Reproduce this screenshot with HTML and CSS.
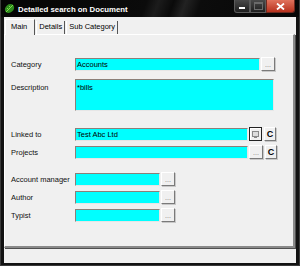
FILE: index.html
```html
<!DOCTYPE html>
<html lang="en">
<head>
    <meta charset="UTF-8">
    <title>Detailed search on Document</title>
    <link rel="stylesheet" href="styles.css">
</head>
<body>
<div class="window">
    <div class="titlebar">
        <svg class="app-icon" width="11" height="11" viewBox="0 0 11 11">
            <ellipse cx="5.5" cy="5.5" rx="5" ry="4" transform="rotate(-40 5.5 5.5)" fill="#2e8b1e"/>
            <path d="M2 9 L9 2 M3 5 L5 7 M5 3 L7 5" stroke="#7fdc4a" stroke-width="1" fill="none"/>
        </svg>
        <span class="title">Detailed search on Document</span>
        <div class="caption">
            <span class="cap cap-min"><i></i></span>
            <span class="cap cap-max"><i></i></span>
            <span class="cap cap-close">
                <svg width="9" height="7" viewBox="0 0 9 7"><path d="M1 0.5 L8 6.5 M8 0.5 L1 6.5" stroke="#fff" stroke-width="1.8"/></svg>
            </span>
        </div>
    </div>

    <div class="client">
        <div class="tabs">
            <span class="tab active">Main</span>
            <span class="tab">Details</span>
            <span class="tab">Sub Category</span>
        </div>

        <div class="panel">
            <div class="row row-category">
                <span class="label">Category</span>
                <span class="field w-category">Accounts</span>
                <span class="btn dots">...</span>
            </div>
            <div class="row row-desc">
                <span class="label label-top">Description</span>
                <span class="field area">*bills</span>
            </div>
            <div class="row row-linked">
                <span class="label">Linked to</span>
                <span class="field w-linked">Test Abc Ltd</span>
                <span class="btn pick">
                    <svg width="7" height="7" viewBox="0 0 7 7"><rect x="0.5" y="0.5" width="6" height="5" fill="#ddd" stroke="#888"/><rect x="2" y="6" width="3" height="1" fill="#888"/></svg>
                </span>
                <span class="btn clear">C</span>
            </div>
            <div class="row row-projects">
                <span class="label">Projects</span>
                <span class="field w-linked"></span>
                <span class="btn dots">...</span>
                <span class="btn clear">C</span>
            </div>
            <div class="row row-manager">
                <span class="label">Account manager</span>
                <span class="field w-short"></span>
                <span class="btn dots">...</span>
            </div>
            <div class="row row-small">
                <span class="label">Author</span>
                <span class="field w-short"></span>
                <span class="btn dots">...</span>
            </div>
            <div class="row row-small">
                <span class="label">Typist</span>
                <span class="field w-short"></span>
                <span class="btn dots">...</span>
            </div>
        </div>
    </div>
</div>
</body>
</html>
```

FILE: styles.css
```css
body {
    margin: 0;
    background: #ffffff;
    font-family: "Liberation Sans", Arial, sans-serif;
    font-size: 7.5px;
    color: #000;
}

.window {
    width: 300px;
    height: 266px;
    box-sizing: border-box;
    padding: 0 3px 3px 3px;
    background: #121212;
    border: 1px solid #3a3a3a;
    border-top: none;
}

/* title bar */
.titlebar {
    height: 17px;
    display: flex;
    align-items: center;
    margin: 0 -3px;
    padding-left: 3px;
    background: linear-gradient(110deg, #050505 0%, #0b0b0b 48%, #1c1c1c 52%, #0a0a0a 57%, #222 61%, #0c0c0c 66%, #070707 100%);
}
.app-icon {
    margin-right: 3px;
}
.title {
    color: #fff;
    font-weight: bold;
    font-size: 7.8px;
    flex: 1;
    padding-top: 1px;
}
.caption {
    display: flex;
    align-self: flex-start;
    margin-right: 4px;
}
.cap {
    height: 13px;
    width: 16px;
    box-sizing: border-box;
    border: 1px solid #5a5a5a;
    border-top: none;
    background: linear-gradient(#4a4a4a, #1e1e1e);
    display: flex;
    align-items: center;
    justify-content: center;
}
.cap-min {
    border-radius: 0 0 0 3px;
}
.cap-min i {
    display: block;
    width: 6px;
    height: 2px;
    background: #fff;
    margin-top: 3px;
}
.cap-max i {
    display: block;
    width: 7px;
    height: 5px;
    border: 1px solid #6a6a6a;
    border-top-width: 2px;
}
.cap-close {
    width: 29px;
    border-color: #6e2a20;
    border-radius: 0 0 3px 0;
    background: linear-gradient(#e0725c, #b8321e);
}

/* client area */
.client {
    height: 246px;
    background: #f0f0f0;
}
.tabs {
    height: 17px;
    display: flex;
    align-items: flex-end;
    padding-left: 1px;
}
.tab {
    height: 13px;
    line-height: 12px;
    padding: 0 2px;
    margin-right: 1px;
    border-left: 1px solid #fff;
    border-right: 1px solid #555;
    box-sizing: border-box;
}
.tab.active {
    height: 16px;
    line-height: 14px;
    padding: 0 7px 0 5px;
    margin-bottom: -1px;
    background: #f0f0f0;
    border-top: 1px solid #fff;
    position: relative;
    z-index: 1;
}

.panel {
    width: 291px;
    height: 214px;
    box-sizing: border-box;
    border-top: 1px solid #fff;
    border-left: 1px solid #fff;
    border-right: 2px solid #8a8a8a;
    border-bottom: 2px solid #8a8a8a;
    box-shadow: 1px 1px 0 #505050;
    padding-left: 6px;
}

.row {
    display: flex;
    align-items: center;
    height: 14px;
}
.row-category { margin-top: 22px; }
.row-desc { margin-top: 8px; height: 32px; align-items: flex-start; }
.row-linked { margin-top: 16px; }
.row-projects { margin-top: 4px; }
.row-manager { margin-top: 13px; }
.row-small { margin-top: 4px; }

.label {
    width: 64px;
    flex-shrink: 0;
    color: #111;
    white-space: nowrap;
}
.label-top {
    padding-top: 4px;
}

.field {
    height: 13px;
    box-sizing: border-box;
    background: #00ffff;
    border: 1px solid;
    border-color: #8c7f78 #e6e6e6 #e6e6e6 #8c7f78;
    padding-left: 1px;
    line-height: 11px;
    white-space: nowrap;
}
.w-category { width: 185px; }
.w-linked { width: 173px; }
.w-short { width: 85px; }
.area {
    width: 199px;
    height: 32px;
    padding-top: 2px;
}

.btn {
    height: 14px;
    width: 14px;
    box-sizing: border-box;
    margin-left: 1px;
    border: 1px solid;
    border-color: #fff #7a7a7a #7a7a7a #fff;
    box-shadow: 1px 1px 0 #c8c8c8;
    background: #f0f0f0;
    display: flex;
    align-items: center;
    justify-content: center;
}
.dots {
    color: #777;
    font-size: 7px;
    line-height: 7px;
    align-items: flex-end;
    padding-bottom: 2px;
}
.pick {
    width: 13px;
    border-color: #222;
    box-shadow: inset 1px 1px 0 #fff;
}
.clear {
    width: 12px;
    margin-left: 2px;
    font-weight: bold;
    font-size: 9px;
}
```
